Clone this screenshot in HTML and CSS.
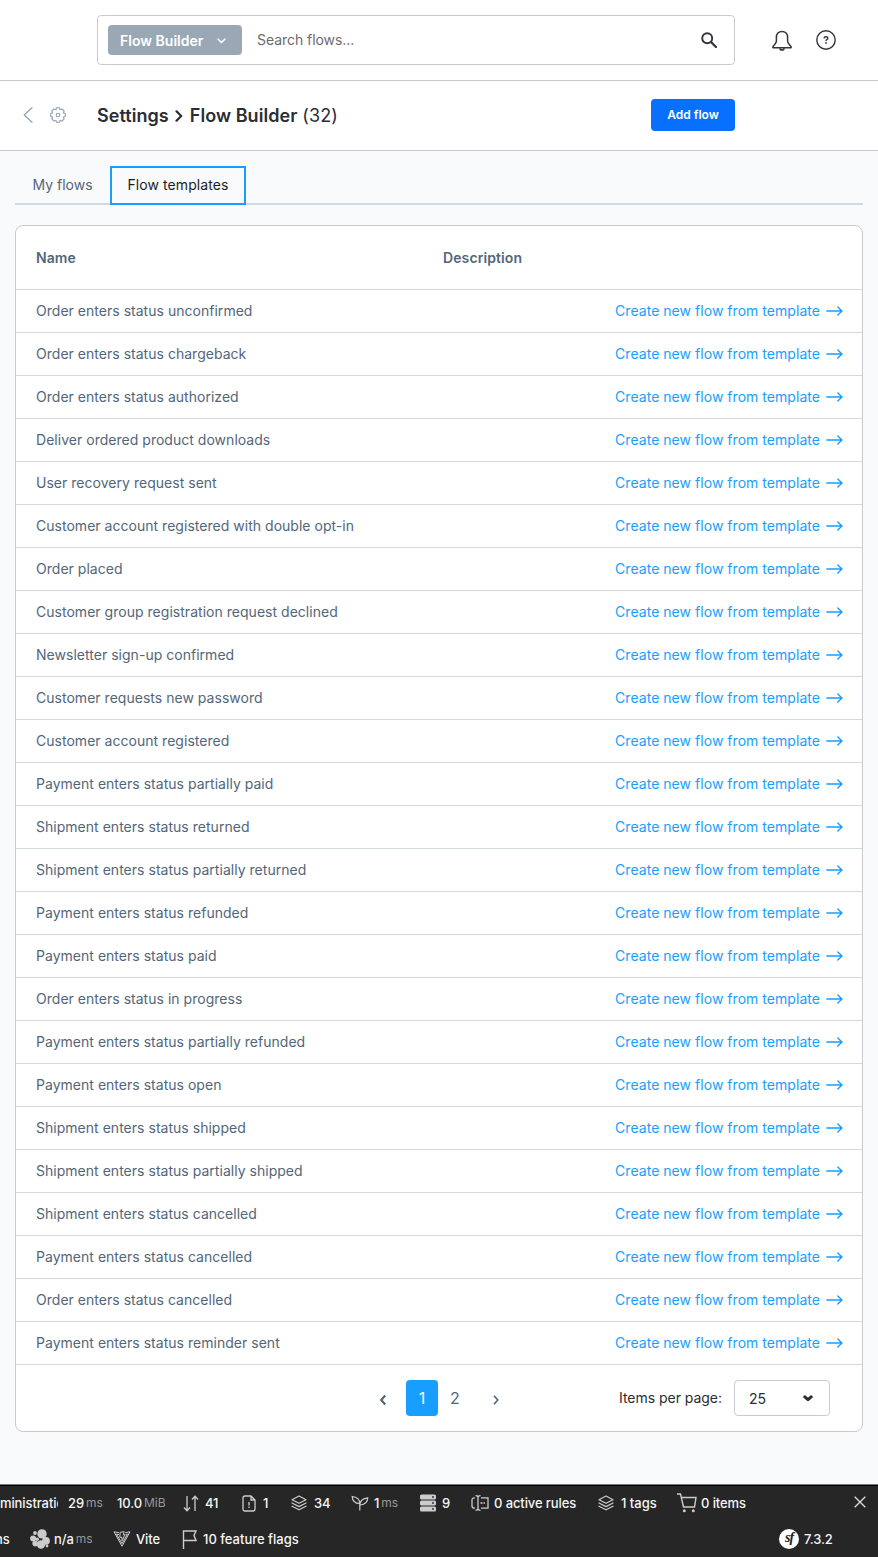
FILE: index.html
```html
<!DOCTYPE html>
<html lang="en">
<head>
<meta charset="utf-8">
<title>Flow Builder</title>
<link rel="stylesheet" href="styles.css">
</head>
<body>
<svg class="defs" width="0" height="0">
  <symbol id="arrow" viewBox="0 0 17 12"><path d="M.8 6H15.800M11.800 2 16 6 11.800 10" fill="none" stroke="currentColor" stroke-width="1.400" stroke-linecap="round" stroke-linejoin="round"/></symbol>
  <symbol id="layers" viewBox="0 0 16 16"><path d="M8 1 15 4.700 8 8.300 1 4.700ZM1 8 8 11.600 15 8M1 11.200 8 14.800 15 11.200" fill="none" stroke="currentColor" stroke-width="1.200" stroke-linejoin="round" stroke-linecap="round"/></symbol>
</svg>
<header class="topbar">
  <div class="search">
    <div class="search-type">Flow Builder
      <svg width="9" height="6" viewBox="0 0 9 6"><path d="M1.200 1.200 4.500 4.500 7.800 1.200" fill="none" stroke="currentColor" stroke-width="1.600" stroke-linecap="round" stroke-linejoin="round"/></svg>
    </div>
    <span class="search-placeholder">Search flows...</span>
    <svg class="search-icon" width="16" height="16" viewBox="0 0 16 16" fill="none" stroke="currentColor"><circle cx="6.200" cy="6.200" r="5" stroke-width="1.900"/><path d="M10 10 15 15" stroke-width="2.200" stroke-linecap="round"/></svg>
  </div>
  <svg class="bell" width="20" height="21" viewBox="0 0 20 21" fill="none" stroke="currentColor" stroke-width="1.500" stroke-linejoin="round"><path d="M10 1.400C6.600 1.400 4.400 3.800 4.400 7.100V11.100C4.400 12.700 3.800 13.500 2.300 15.100 1 16.400.5 16.800.9 17.800H19.100C19.500 16.800 19 16.400 17.700 15.100 16.200 13.500 15.600 12.700 15.600 11.100V7.100C15.600 3.800 13.400 1.400 10 1.400Z"/><path d="M8 18.300Q8 20 10 20T12 18.300" stroke-width="1.700"/></svg>
  <svg class="help" width="20" height="20" viewBox="0 0 20 20" fill="none" stroke="currentColor"><circle cx="10" cy="10" r="9.200" stroke-width="1.400"/><path d="M8.100 8.400V8Q8.200 6.700 10 6.700T11.900 8.300Q11.900 9.300 10.800 9.700 10 10 10 11" stroke-width="1.400"/><circle cx="10" cy="12.900" r=".9" fill="currentColor" stroke="none"/></svg>
</header>
<div class="pagehead">
  <svg class="back" width="10" height="16" viewBox="0 0 10 16"><path d="M9 .7 1.200 8 9 15.300" fill="none" stroke="currentColor" stroke-width="1.200" stroke-linecap="round" stroke-linejoin="round"/></svg>
  <svg class="gear" width="16" height="16" viewBox="0 0 16 16" fill="none" stroke="currentColor" stroke-width="1.100" stroke-linejoin="round"><path d="M6.600.7H9.400L10 2.600 12 1.900 14.100 4 13.400 6 15.300 6.600V9.400L13.400 10 14.100 12 12 14.100 10 13.400 9.400 15.300H6.600L6 13.400 4 14.100 1.900 12 2.600 10 .7 9.400V6.600L2.600 6 1.900 4 4 1.900 6 2.600Z"/><circle cx="8" cy="8" r="1.800"/></svg>
  <h1 class="title"><span class="crumb">Settings</span><svg width="8" height="12" viewBox="0 0 8 12"><path d="M1.500 1.300 6.200 6 1.500 10.700" fill="none" stroke="currentColor" stroke-width="2.200" stroke-linecap="round" stroke-linejoin="round"/></svg><span class="crumb">Flow Builder</span><span class="count">(32)</span></h1>
  <button class="add">Add flow</button>
</div>
<main class="content">
  <nav class="tabs"><a class="tab">My flows</a><a class="tab active">Flow templates</a></nav>
  <section class="card">
    <div class="row head"><span class="name">Name</span><span>Description</span></div>
    <div class="row"><span>Order enters status unconfirmed</span><a class="create">Create new flow from template<svg><use href="#arrow"/></svg></a></div>
    <div class="row"><span>Order enters status chargeback</span><a class="create">Create new flow from template<svg><use href="#arrow"/></svg></a></div>
    <div class="row"><span>Order enters status authorized</span><a class="create">Create new flow from template<svg><use href="#arrow"/></svg></a></div>
    <div class="row"><span>Deliver ordered product downloads</span><a class="create">Create new flow from template<svg><use href="#arrow"/></svg></a></div>
    <div class="row"><span>User recovery request sent</span><a class="create">Create new flow from template<svg><use href="#arrow"/></svg></a></div>
    <div class="row"><span>Customer account registered with double opt-in</span><a class="create">Create new flow from template<svg><use href="#arrow"/></svg></a></div>
    <div class="row"><span>Order placed</span><a class="create">Create new flow from template<svg><use href="#arrow"/></svg></a></div>
    <div class="row"><span>Customer group registration request declined</span><a class="create">Create new flow from template<svg><use href="#arrow"/></svg></a></div>
    <div class="row"><span>Newsletter sign-up confirmed</span><a class="create">Create new flow from template<svg><use href="#arrow"/></svg></a></div>
    <div class="row"><span>Customer requests new password</span><a class="create">Create new flow from template<svg><use href="#arrow"/></svg></a></div>
    <div class="row"><span>Customer account registered</span><a class="create">Create new flow from template<svg><use href="#arrow"/></svg></a></div>
    <div class="row"><span>Payment enters status partially paid</span><a class="create">Create new flow from template<svg><use href="#arrow"/></svg></a></div>
    <div class="row"><span>Shipment enters status returned</span><a class="create">Create new flow from template<svg><use href="#arrow"/></svg></a></div>
    <div class="row"><span>Shipment enters status partially returned</span><a class="create">Create new flow from template<svg><use href="#arrow"/></svg></a></div>
    <div class="row"><span>Payment enters status refunded</span><a class="create">Create new flow from template<svg><use href="#arrow"/></svg></a></div>
    <div class="row"><span>Payment enters status paid</span><a class="create">Create new flow from template<svg><use href="#arrow"/></svg></a></div>
    <div class="row"><span>Order enters status in progress</span><a class="create">Create new flow from template<svg><use href="#arrow"/></svg></a></div>
    <div class="row"><span>Payment enters status partially refunded</span><a class="create">Create new flow from template<svg><use href="#arrow"/></svg></a></div>
    <div class="row"><span>Payment enters status open</span><a class="create">Create new flow from template<svg><use href="#arrow"/></svg></a></div>
    <div class="row"><span>Shipment enters status shipped</span><a class="create">Create new flow from template<svg><use href="#arrow"/></svg></a></div>
    <div class="row"><span>Shipment enters status partially shipped</span><a class="create">Create new flow from template<svg><use href="#arrow"/></svg></a></div>
    <div class="row"><span>Shipment enters status cancelled</span><a class="create">Create new flow from template<svg><use href="#arrow"/></svg></a></div>
    <div class="row"><span>Payment enters status cancelled</span><a class="create">Create new flow from template<svg><use href="#arrow"/></svg></a></div>
    <div class="row"><span>Order enters status cancelled</span><a class="create">Create new flow from template<svg><use href="#arrow"/></svg></a></div>
    <div class="row"><span>Payment enters status reminder sent</span><a class="create">Create new flow from template<svg><use href="#arrow"/></svg></a></div>
    <footer class="pager">
      <svg class="prev" width="8" height="12" viewBox="0 0 8 12"><path d="M6.200 1.600 2.200 6 6.200 10.400" fill="none" stroke="currentColor" stroke-width="2.200" stroke-linejoin="round"/></svg>
      <span class="page current">1</span><span class="page">2</span>
      <svg class="next" width="8" height="12" viewBox="0 0 8 12"><path d="M2 1.800 5.800 6 2 10.200" fill="none" stroke="currentColor" stroke-width="1.700" stroke-linejoin="round"/></svg>
      <span class="per-label">Items per page:</span>
      <div class="per">25<svg width="10" height="7" viewBox="0 0 10 7"><path d="M1.800 1.900 5 4.600 8.200 1.900" fill="none" stroke="currentColor" stroke-width="3" stroke-linecap="round" stroke-linejoin="round"/></svg></div>
    </footer>
  </section>
</main>
<div class="toolbar">
  <div class="bar first">
    <span class="item"><span class="clip">ministratic</span></span>
    <span class="item">29<small>ms</small></span>
    <span class="item">10.0<small>MiB</small></span>
    <span class="item"><svg width="16" height="17" viewBox="0 0 16 17" fill="none" stroke="currentColor" stroke-width="1.300"><path d="M4 1V15.500M1 12.500 4 15.700 7 12.500M12 16V1.500M9 4.500 12 1.300 15 4.500"/></svg><b class="n-sort">41</b></span>
    <span class="item"><svg width="14" height="17" viewBox="0 0 14 17" fill="none" stroke="currentColor" stroke-width="1.300"><path d="M3 1H9L13 5V14Q13 16 11 16H3Q1 16 1 14V3Q1 1 3 1ZM9 1V5H13M7 7V10.500M7 11.500V13"/></svg><b class="n-doc">1</b></span>
    <span class="item"><svg width="16" height="16"><use href="#layers"/></svg><b class="n-layer">34</b></span>
    <span class="item"><svg width="18" height="16" viewBox="0 0 18 16" fill="none" stroke="currentColor" stroke-width="1.200"><path d="M8.800 15.500V8.500Q8.600 2.200 1.200 1.500 1.500 8.300 8.800 8.700M8.800 10.500Q9 3.500 16.800 2.800 16.500 9.500 9.200 10"/></svg><b class="n-leaf">1</b><small class="tight">ms</small></span>
    <span class="item"><svg width="18" height="18" viewBox="0 0 18 18"><g fill="currentColor"><rect x="1" y=".5" width="16" height="5" rx="1.500"/><rect x="1" y="6.500" width="16" height="5" rx="1.500"/><rect x="1" y="12.500" width="16" height="5" rx="1.500"/></g><g fill="#262626"><circle cx="14" cy="3" r=".9"/><circle cx="14" cy="9" r=".9"/><circle cx="14" cy="15" r=".9"/></g></svg><b class="n-db">9</b></span>
    <span class="item"><svg width="18" height="16" viewBox="0 0 18 16" fill="none" stroke="currentColor" stroke-width="1.300"><path d="M4 2.800Q1 2.800 1 5V11Q1 13.200 4 13.200M10 2.800H17V13.200H10M4.500.7Q7 .7 7 2.500V13.500Q7 15.300 4.500 15.300M9.500.7Q7 .7 7 2.500M9.500 15.300Q7 15.300 7 13.500M9.500 8H11.500M12.500 8H14"/></svg><b class="n-rule">0 active rules</b></span>
    <span class="item"><svg width="16" height="16"><use href="#layers"/></svg><b class="n-tag">1 tags</b></span>
    <span class="item cart"><svg width="20" height="20" viewBox="0 0 20 20" fill="none" stroke="currentColor" stroke-width="1.400"><path d="M0 1H3.500L6.500 14H17.500L19 4.500H4.300"/><circle cx="7.300" cy="17.800" r="1.500" fill="currentColor" stroke="none"/><circle cx="16.300" cy="17.800" r="1.500" fill="currentColor" stroke="none"/></svg><b>0 items</b></span>
    <svg class="close" width="12" height="12" viewBox="0 0 12 12"><path d="M.7.7 11.300 11.300M11.300.7.7 11.300" stroke="currentColor" stroke-width="1.300"/></svg>
  </div>
  <div class="bar second">
    <span class="item"><span class="ns">ns</span></span>
    <span class="item"><svg width="20" height="20" viewBox="0 0 20 20" fill="currentColor"><circle cx="12" cy="4.900" r="4.700"/><circle cx="5" cy="4" r="1.900"/><circle cx="3.100" cy="9.600" r="3"/><circle cx="7.200" cy="10.200" r="1.800"/><circle cx="16" cy="11.800" r="3.900"/><circle cx="5.200" cy="14.600" r="2.800"/><circle cx="11" cy="15.500" r="4.200"/><circle cx="17" cy="17" r="1.400"/></svg><b class="n-clover">n/a</b><small class="tight">ms</small></span>
    <span class="item"><svg width="18" height="16" viewBox="0 0 18 16" fill="none" stroke="currentColor" stroke-width="1" stroke-linejoin="round"><path d="M6.200 1.700 1 .8 9 15.200 17 .8 12.200 1.700M6 3.600 3.500 3.200 9 12.600 14.500 3.200 12.500 3.600M7.200 1.300 11.200.7 10.200 3.800H12L9 9.800V6.300H6.800Z"/></svg><b class="n-vite">Vite</b></span>
    <span class="item"><svg width="15" height="19" viewBox="0 0 15 19" fill="none" stroke="currentColor" stroke-width="1.400"><path d="M1.500 19V1H14L12 5.500 14 10.500H1.500"/></svg><b class="n-flag">10 feature flags</b></span>
    <span class="item"><span class="sf"><i>sf</i></span><b class="n-sf">7.3.2</b></span>
  </div>
</div>
</body>
</html>
```
FILE: styles.css
```css
* { box-sizing: border-box; }
body { margin: 0; width: 878px; height: 1557px; overflow: hidden; background: #f9fafc; color: #2b2d33; font: 14px/20px Inter, "Liberation Sans", sans-serif; display: flex; flex-direction: column; }
svg { flex: none; display: block; }
.defs { position: absolute; }
.topbar { height: 81px; flex: none; background: #fff; border-bottom: 1px solid #c9cbd0; padding: 15px 0 0 97px; display: flex; align-items: flex-start; color: #333439; }
.search { width: 638px; height: 50px; border: 1px solid #c9cbd0; border-radius: 4px; display: flex; align-items: center; padding: 0 17px 0 10px; }
.search-type { width: 134px; height: 30px; background: #9aa8b5; border-radius: 4px; color: #fff; font-weight: 600; padding: 2px 16px 0 12px; display: flex; align-items: center; justify-content: space-between; letter-spacing: .02px; }
.search-placeholder { flex: 1; padding-left: 15px; color: #6b6b6e; letter-spacing: -.05px; }
.bell { margin: 15px 0 0 37px; }
.help { margin: 15px 0 0 24px; }
.pagehead { height: 70px; flex: none; background: #fff; border-bottom: 1px solid #c9cbd0; display: flex; align-items: center; padding: 0 0 1px 23px; }
.back, .gear { color: #8fa2b6; }
.gear { margin-left: 17px; }
.title { margin: 1px 0 0 31px; width: 554px; font-size: 18px; line-height: 26px; font-weight: 600; display: flex; align-items: center; letter-spacing: .05px; }
.title svg { margin: 0 7px 0 6px; }
.count { font-weight: 400; margin-left: 5px; }
.add { width: 84px; height: 32px; border: 0; border-radius: 4px; background: #0870ff; color: #fff; font: 600 12px/18px Inter, sans-serif; padding: 0; }
.content { padding: 15px 15px 0; }
.tabs { height: 39px; display: flex; border-bottom: 2px solid #d1d9e0; color: #52667a; }
.tab { width: 95px; height: 39px; text-align: center; line-height: 38px; letter-spacing: 0; }
.tab.active { width: 136px; border: 2px solid #189eff; line-height: 34px; color: #1d1e22; letter-spacing: .08px; }
.card { margin-top: 20px; height: 1207px; background: #fff; border: 1px solid #c9cbd0; border-radius: 8px; }
.row { height: 43px; border-bottom: 1px solid #d1d9e0; padding: 0 19px 0 20px; display: flex; justify-content: space-between; align-items: center; color: #52667a; letter-spacing: .025px; }
.head { height: 64px; justify-content: flex-start; font-weight: 600; letter-spacing: .1px; }
.name { width: 407px; }
.create { color: #189eff; display: flex; align-items: center; gap: 6px; letter-spacing: .04px; }
.create svg { width: 17px; height: 12px; }
.pager { height: 66px; padding: 0 32px 0 363px; display: flex; align-items: center; color: #52667a; font-size: 16px; }
.prev, .next { margin-top: 4px; }
.prev { margin-right: 19px; }
.page { width: 32px; height: 36px; text-align: center; line-height: 36px; }
.current { background: #189eff; color: #fff; border-radius: 4px; }
.page + .page { margin-left: 1px; }
.next { margin-left: 21px; }
.per-label { margin-left: auto; font-size: 14px; color: #2b2d33; letter-spacing: -.03px; }
.per { width: 96px; height: 36px; margin-left: 12px; border: 1px solid #c9cbd0; border-radius: 4px; padding: 1px 16px 0 14px; display: flex; align-items: center; justify-content: space-between; font-size: 14px; color: #2b2d33; }
.toolbar { margin-top: auto; height: 73px; flex: none; border-top: 1px solid #777; background: #262626; box-shadow: inset 0 1px #000; color: #f5f5f5; font-size: 13px; font-weight: 500; letter-spacing: -.1px; }
.bar { height: 36px; display: grid; align-items: center; }
.first { grid-template-columns: 68px 49px 66px 59px 49px 60px 68px 52px 127px 79px 177px 12px; }
.second { grid-template-columns: 30px 83px 69px 597px auto; }
.item { display: flex; align-items: center; white-space: nowrap; min-width: 0; }
.item svg { color: #ccc; }
.item b { font-weight: 500; }
.item small { font-size: 12px; font-weight: 400; color: #999; margin-left: 2px; letter-spacing: 0; }
.clip { width: 58px; overflow: hidden; }
.ns { margin-left: -5px; }
.close { margin-top: -2px; color: #ddd; }
.n-sort { margin-left: 6px; }
.n-doc, .n-layer { margin-left: 7px; }
.n-leaf, .n-db { margin-left: 5px; }
.n-rule { margin-left: 5px; }
.n-tag { margin-left: 7px; letter-spacing: 0; }
.cart b { margin-left: 4px; }
.n-clover { margin-left: 4px; }
.n-vite { margin-left: 5px; }
.n-flag { margin-left: 6px; letter-spacing: 0; }
.n-sf { margin-left: 5px; }
.sf { width: 20px; height: 20px; border-radius: 50%; background: #fff; color: #222; text-align: center; font: 700 14px/18px "Liberation Serif", serif; letter-spacing: -1px; }
```
